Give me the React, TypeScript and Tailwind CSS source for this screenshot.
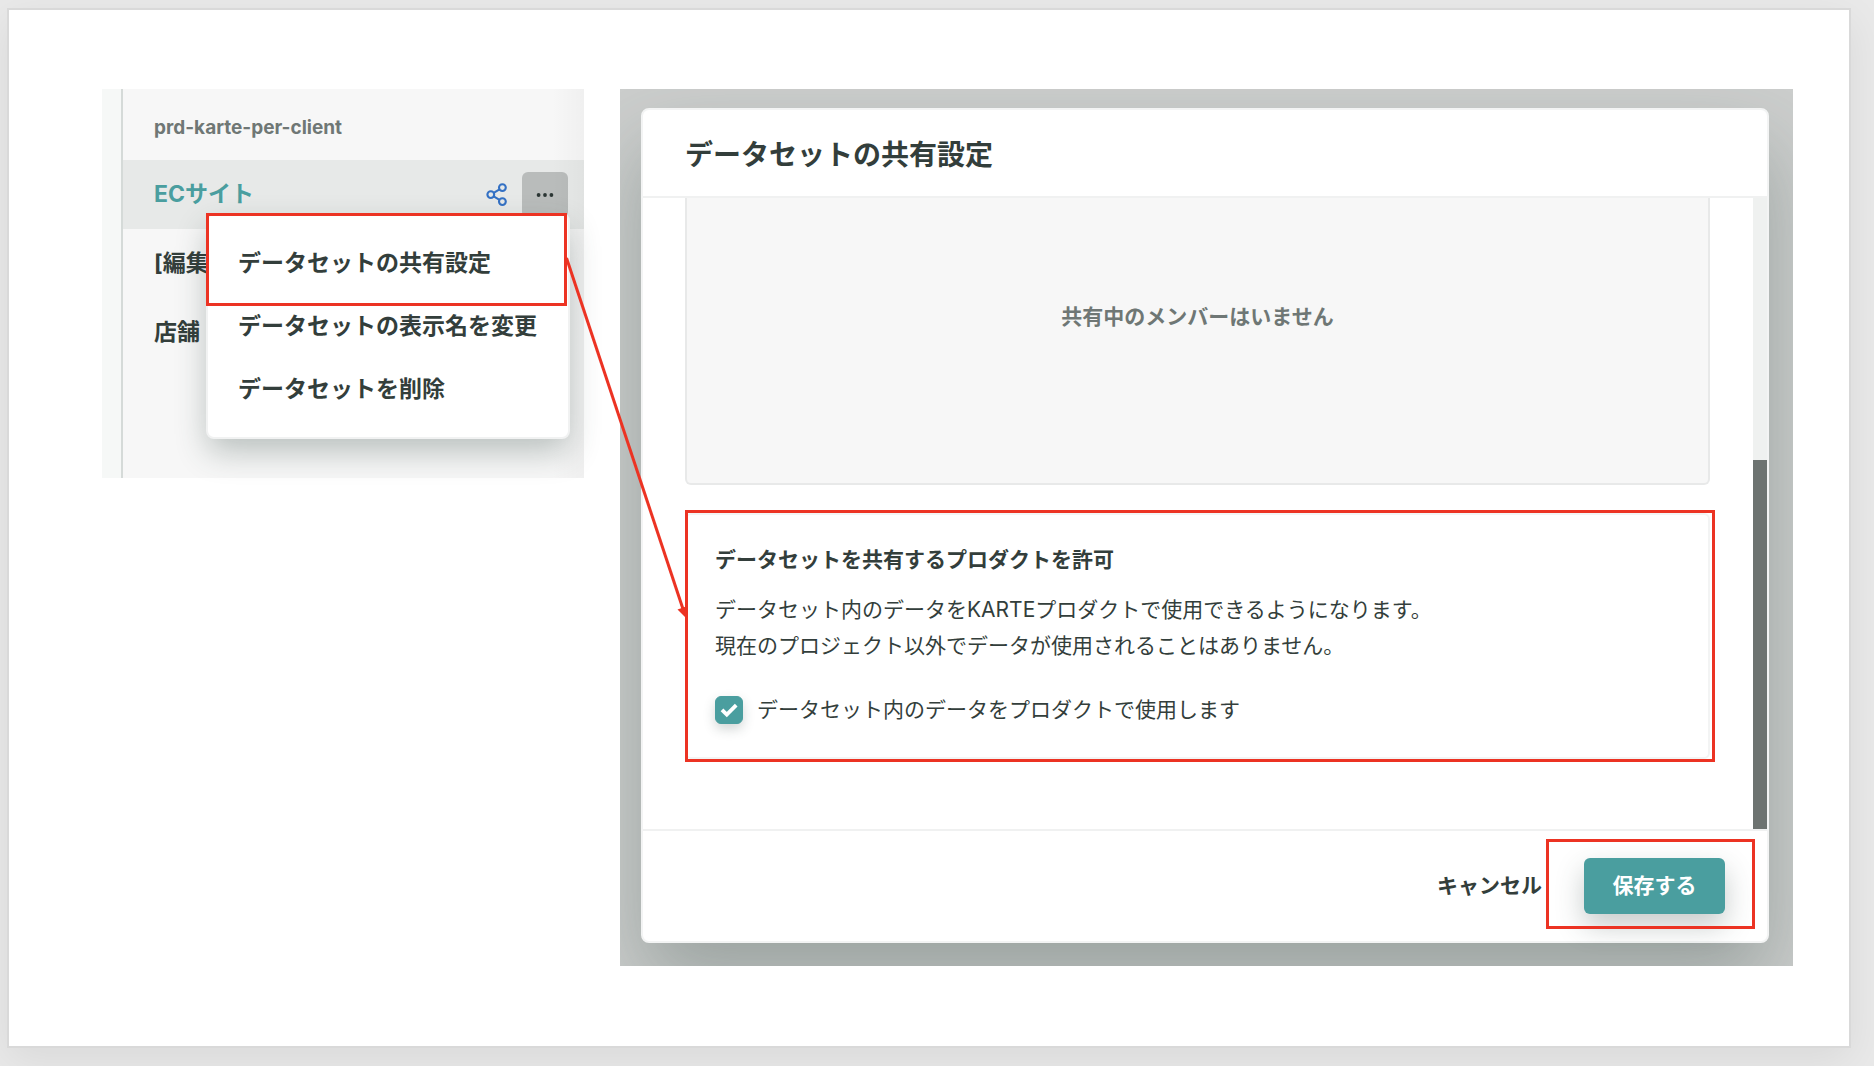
import { useState, type ReactNode } from 'react';
import { clsx } from 'clsx';

const menuItems = ['データセットの共有設定', 'データセットの表示名を変更', 'データセットを削除'];

const ShareIcon = () => (
  <svg viewBox="0 0 22 24" className="h-6 w-[22px]" fill="none" stroke="#3471c4" strokeWidth="2.1" aria-hidden="true">
    <circle cx="4.8" cy="11.6" r="3.4" />
    <circle cx="16.4" cy="4.600" r="3.4" />
    <circle cx="16.4" cy="18.6" r="3.4" />
    <path d="M7.700 9.800 13.5 6.400M7.700 13.400l5.800 3.400" />
  </svg>
);

const DotsIcon = () => (
  <svg viewBox="0 0 18 4" className="h-1 w-[18px]" fill="#2b3634" aria-hidden="true">
    <circle cx="2.6" cy="2" r="1.9" />
    <circle cx="9" cy="2" r="1.9" />
    <circle cx="15.4" cy="2" r="1.9" />
  </svg>
);

// Red frame drawn over the element it points out
const Highlight = ({ className }: { className: string }) => (
  <div className={clsx('pointer-events-none absolute border-3 border-[#ec3323]', className)} />
);

const Row = ({ children, active }: { children: ReactNode; active?: boolean }) => (
  <li
    className={clsx(
      'flex h-[69px] items-center pr-4 pl-[31px] text-[23px] font-bold',
      active ? 'bg-[#e7e9e8] text-[#4a9e9f]' : 'text-[#333e3b]'
    )}
  >
    {children}
  </li>
);

const DatasetPanel = () => (
  <section className="relative h-[389px] w-[482px] shrink-0 bg-[#f6f8f7] pl-[19px]">
    <div className="h-full border-l-2 border-[#d5dad8] bg-[#f7f7f7]">
      <h2 className="flex h-[71px] items-center pt-2 pl-[31px] text-[19px] font-bold text-[#6f7775]">
        prd-karte-per-client
      </h2>
      <ul>
        <Row active>
          <span className="flex-1">ECサイト</span>
          <button type="button" aria-label="共有" className="mr-[14px]">
            <ShareIcon />
          </button>
          <button
            type="button"
            aria-label="メニュー"
            className="flex size-[46px] items-center justify-center rounded-md bg-[#b9bcbb]"
          >
            <DotsIcon />
          </button>
        </Row>
        <Row>[編集</Row>
        <Row>店舗</Row>
      </ul>
    </div>
    <div className="pointer-events-none absolute inset-y-0 right-0 w-8 bg-linear-to-r from-transparent to-black/3" />

    <div className="absolute top-[124px] right-[14px] w-[364px] rounded-lg border-2 border-[#f1f2f2] bg-white pt-[17px] pb-4 shadow-[0_14px_32px_-2px_rgba(51,70,64,0.32)]">
      {menuItems.map((item) => (
        <button
          key={item}
          type="button"
          className="flex h-[63px] w-full items-center pl-[30px] text-[23px] font-bold whitespace-nowrap text-[#333e3b]"
        >
          {item}
        </button>
      ))}
      <Highlight className="-top-[2px] right-[1px] -left-[2px] h-[93px]" />
    </div>
  </section>
);

const ShareDialog = () => {
  const [allowed, setAllowed] = useState(true);

  return (
    <section className="min-w-0 flex-1 overflow-hidden bg-[#cccecd] pt-[19px] pr-6 pb-[23px] pl-[21px]">
      <div
        role="dialog"
        aria-labelledby="dialog-title"
        className="rounded-lg border-2 border-[#f3f4f4] bg-white shadow-[0_40px_80px_rgba(51,70,64,0.32)]"
      >
        <header className="flex h-[88px] items-center border-b-2 border-[#f0f1f1] px-[42px] pt-[3px]">
          <h1 id="dialog-title" className="text-[28px] font-bold text-[#333e3b]">
            データセットの共有設定
          </h1>
        </header>

        <div className="flex">
          <div className="flex-1 pr-[43px] pb-[70px] pl-[42px]">
            <p className="rounded-b-md border-2 border-t-0 border-[#e8e9e9] bg-[#f7f7f7] pt-[101px] pb-[148px] text-center text-[21px] leading-9 font-bold text-[#6f7775]">
              共有中のメンバーはいません
            </p>

            <div className="relative mt-7 rounded-md border-2 border-[#f3f4f4] px-7 pt-[27px] pb-[29px] text-[21px] leading-9 text-[#333e3b]">
              <h2 className="font-bold">データセットを共有するプロダクトを許可</h2>
              <p className="mt-[14px]">
                データセット内のデータをKARTEプロダクトで使用できるようになります。
                <br />
                現在のプロジェクト以外でデータが使用されることはありません。
              </p>
              <div className="mt-7 flex items-center">
                <span className="relative mr-[14px] size-7">
                  <input
                    id="allow-products"
                    type="checkbox"
                    checked={allowed}
                    onChange={(e) => setAllowed(e.target.checked)}
                    className="block size-7 appearance-none rounded-md border border-[#4a9e9f] shadow-[0_5px_12px_rgba(51,70,64,0.22)] checked:bg-[#4a9e9f]"
                  />
                  {allowed && (
                    <svg
                      viewBox="0 0 28 28"
                      className="pointer-events-none absolute inset-0 size-7"
                      fill="none"
                      stroke="#fff"
                      strokeWidth="3.8"
                      aria-hidden="true"
                    >
                      <path d="M7 13.800 11.800 18.600 21.200 9.200" />
                    </svg>
                  )}
                </span>
                <label htmlFor="allow-products">データセット内のデータをプロダクトで使用します</label>
              </div>
              <Highlight className="-top-[5px] -right-[7px] -bottom-[5px] -left-[2px]" />
            </div>
          </div>

          {/* Scrollbar */}
          <div className="flex w-[14px] flex-col bg-[#eff1f0]">
            <div className="mt-auto h-[369px] bg-[#6d7371]" />
          </div>
        </div>

        <footer className="flex items-center justify-end border-t-2 border-[#f0f1f1] pt-[27px] pr-[42px] pb-[27px] text-[21px] font-bold">
          <button type="button" className="mr-[42px] text-[#333e3b]">
            キャンセル
          </button>
          <div className="relative">
            <button
              type="button"
              className="block h-14 w-[141px] rounded-md bg-[#4a9e9f] text-white shadow-[0_12px_28px_rgba(51,70,64,0.28)]"
            >
              保存する
            </button>
            <Highlight className="-top-[19px] -right-[30px] -bottom-[15px] -left-[38px]" />
          </div>
        </footer>
      </div>
    </section>
  );
};

export default function App() {
  return (
    <div className="min-h-screen overflow-hidden bg-[#e9e9e9] pt-2 pr-[23px] pb-[18px] pl-[7px] font-['Inter','Noto_Sans_CJK_JP',sans-serif]">
      <main className="border-2 border-[#d9d9d9] bg-white pt-[79px] pr-14 pb-20 pl-[93px] shadow-[0_12px_40px_rgba(0,0,0,0.07)]">
        <div className="relative flex items-start gap-9">
          <DatasetPanel />
          <ShareDialog />
          {/* Arrow from the menu item to the product setting */}
          <svg
            viewBox="0 0 124 362"
            className="pointer-events-none absolute top-[168px] left-[463px] h-[362px] w-[124px]"
            aria-hidden="true"
          >
            <path d="M1.5 1 118 352" stroke="#ec3323" strokeWidth="3" />
            <path d="M112.500 352.500 122.500 349 121 361Z" fill="#ec3323" />
          </svg>
        </div>
      </main>
    </div>
  );
}
